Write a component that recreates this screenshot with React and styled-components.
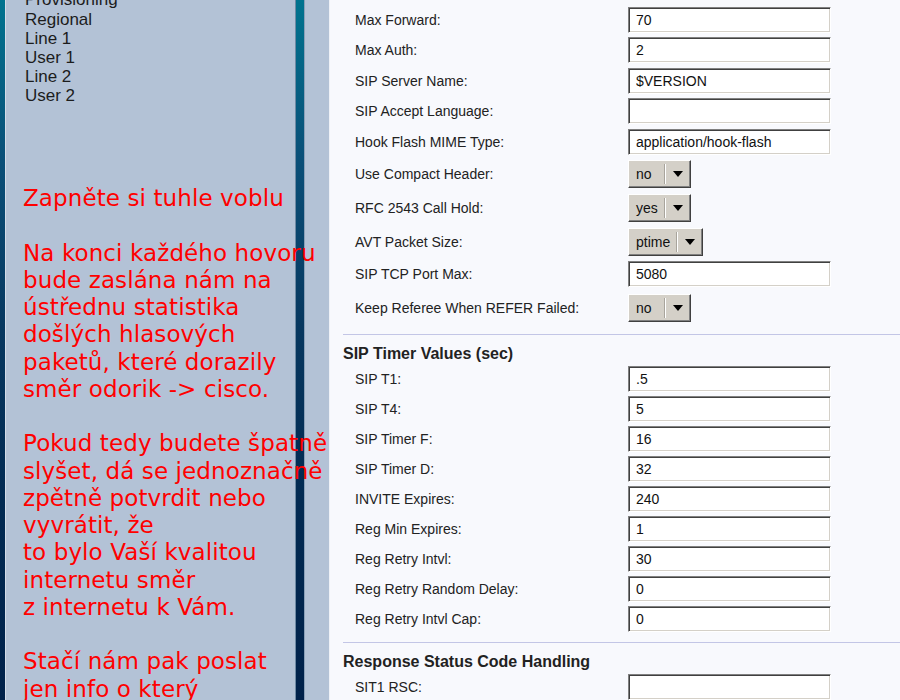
import React from 'react';
import styled, { createGlobalStyle } from 'styled-components';

const Global = createGlobalStyle`
  *, *::before, *::after { box-sizing: border-box; }
  html, body { margin: 0; padding: 0; height: 100%; overflow: hidden; background: #f8f9fd; }
  body { font-family: "Liberation Sans", Arial, sans-serif; }
`;

const railGradient = `linear-gradient(180deg, #00738f 0px, #0a4f78 160px, #07375f 330px, #022a52 500px, #00214a 700px)`;

const Page = styled.div`
  display: flex;
  height: 700px;
  overflow: hidden;
`;

const Nav = styled.aside`
  display: flex;
  flex: none;
  width: 329px;
  background: #b3c2d6;
`;

const Edge = styled.div`
  flex: none;
  width: 6px;
  background: ${railGradient};
  border-right: 1px solid #d3dbe7;
`;

const Panel = styled.div`
  flex: none;
  width: 289px;
  padding-left: 17px;
`;

const Menu = styled.ul`
  list-style: none;
  margin: -9.7px 0 0;
  padding: 0 0 0 2px;
  font-size: 17px;
  line-height: 19.2px;
  color: #1c1c1c;
`;

const MenuItem = styled.li`
  white-space: nowrap;
`;

const Notice = styled.div`
  position: relative;
  z-index: 1;
  margin-top: 79.7px;
  font-family: "DejaVu Sans", Verdana, sans-serif;
  font-size: 23px;
  line-height: 27.25px;
  letter-spacing: 0.1px;
  color: #ff0000;
  white-space: nowrap;
`;

const NoticePara = styled.p`
  margin: 0 0 27.25px;
`;

const Rail = styled.div`
  flex: none;
  width: 10px;
  background: ${railGradient};
  border-left: 1px solid #6e8aa4;
  border-right: 1px solid #8aa0b8;
`;

const Gutter = styled.div`
  flex: 1;
`;

const Content = styled.main`
  flex: 1;
  min-width: 0;
  background: #f8f9fd;
  border-left: 1px solid #eef1f7;
  padding-left: 13px;
`;

const Sections = styled.div`
  display: flex;
  flex-direction: column;
  gap: 8px;
  margin-top: -25px;
`;

const Section = styled.section`
  border-top: 1px solid #c3c6e6;
  padding-top: 9px;
`;

const SectionTitle = styled.h3`
  margin: 0;
  font-size: 16px;
  line-height: 20px;
  font-weight: bold;
  color: #222;
  white-space: nowrap;
`;

const Row = styled.div`
  display: flex;
  align-items: center;
  height: ${(p) => p.$h || 30}px;
  padding-left: 12px;
`;

const Label = styled.label`
  flex: none;
  width: 273px;
  font-size: 14px;
  color: #222;
  white-space: nowrap;
`;

const Field = styled.input`
  width: 203px;
  height: 26px;
  margin: 0;
  padding: 0 7px;
  font-family: "Liberation Sans", Arial, sans-serif;
  font-size: 14px;
  color: #111;
  background: #fff;
  border: 1px solid;
  border-color: #808080 #ffffff #ffffff #808080;
  box-shadow: inset 1px 1px #404040, inset -1px -1px #d4d0c8;
  outline: none;
`;

const Dropdown = styled.div`
  display: inline-flex;
  align-items: stretch;
  width: ${(p) => p.$w}px;
  height: 28px;
  background: #d4d0c8;
  border: 1px solid;
  border-color: #ffffff #404040 #404040 #ffffff;
  box-shadow: inset -1px -1px #808080;
  font-size: 14px;
  color: #111;
`;

const DropValue = styled.span`
  flex: 1;
  display: flex;
  align-items: center;
  padding-left: 7px;
`;

const DropArrow = styled.span`
  flex: none;
  width: 24px;
  margin: 3px 1px 3px 0;
  display: flex;
  align-items: center;
  justify-content: center;
  border-left: 1px solid #ffffff;
  box-shadow: -1px 0 #a8a49c;

  &::after {
    content: '';
    border-left: 5px solid transparent;
    border-right: 5px solid transparent;
    border-top: 6px solid #000;
  }
`;

const menu = ['Provisioning', 'Regional', 'Line 1', 'User 1', 'Line 2', 'User 2'];

const notice = [
  ['Zapněte si tuhle voblu'],
  [
    'Na konci každého hovoru',
    'bude zaslána nám na',
    'ústřednu statistika',
    'došlých hlasových',
    'paketů, které dorazily',
    'směr odorik -> cisco.',
  ],
  [
    'Pokud tedy budete špatně',
    'slyšet, dá se jednoznačně',
    'zpětně potvrdit nebo',
    'vyvrátit, že',
    'to bylo Vaší kvalitou',
    'internetu směr',
    'z internetu k Vám.',
  ],
  ['Stačí nám pak poslat', 'jen info o který', 'hovor se jednalo.'],
];

const sections = [
  {
    title: 'SIP Parameters',
    rows: [
      { label: 'Max Forward:', value: '70', h: 30 },
      { label: 'Max Auth:', value: '2', h: 30 },
      { label: 'SIP Server Name:', value: '$VERSION', h: 31 },
      { label: 'SIP Accept Language:', value: '', h: 30 },
      { label: 'Hook Flash MIME Type:', value: 'application/hook-flash', h: 31 },
      { label: 'Use Compact Header:', option: 'no', w: 63, h: 34 },
      { label: 'RFC 2543 Call Hold:', option: 'yes', w: 63, h: 34 },
      { label: 'AVT Packet Size:', option: 'ptime', w: 75, h: 33 },
      { label: 'SIP TCP Port Max:', value: '5080', h: 32 },
      { label: 'Keep Referee When REFER Failed:', option: 'no', w: 63, h: 36 },
    ],
  },
  {
    title: 'SIP Timer Values (sec)',
    rows: [
      { label: 'SIP T1:', value: '.5' },
      { label: 'SIP T4:', value: '5' },
      { label: 'SIP Timer F:', value: '16' },
      { label: 'SIP Timer D:', value: '32' },
      { label: 'INVITE Expires:', value: '240' },
      { label: 'Reg Min Expires:', value: '1' },
      { label: 'Reg Retry Intvl:', value: '30' },
      { label: 'Reg Retry Random Delay:', value: '0' },
      { label: 'Reg Retry Intvl Cap:', value: '0' },
    ],
  },
  {
    title: 'Response Status Code Handling',
    rows: [
      { label: 'SIT1 RSC:', value: '' },
      { label: 'SIT2 RSC:', value: '' },
      { label: 'SIT3 RSC:', value: '' },
    ],
  },
];

function SettingRow({ row }) {
  return (
    <Row $h={row.h}>
      <Label>{row.label}</Label>
      {row.option ? (
        <Dropdown $w={row.w}>
          <DropValue>{row.option}</DropValue>
          <DropArrow />
        </Dropdown>
      ) : (
        <Field type="text" defaultValue={row.value} />
      )}
    </Row>
  );
}

export default function App() {
  return (
    <>
      <Global />
      <Page>
        <Nav>
          <Edge />
          <Panel>
            <Menu>
              {menu.map((m) => (
                <MenuItem key={m}>{m}</MenuItem>
              ))}
            </Menu>
            <Notice>
              {notice.map((para, i) => (
                <NoticePara key={i}>
                  {para.map((line, j) => (
                    <React.Fragment key={j}>
                      {j > 0 && <br />}
                      {line}
                    </React.Fragment>
                  ))}
                </NoticePara>
              ))}
            </Notice>
          </Panel>
          <Rail />
          <Gutter />
        </Nav>
        <Content>
          <Sections>
            {sections.map((s) => (
              <Section key={s.title}>
                <SectionTitle>{s.title}</SectionTitle>
                {s.rows.map((r) => (
                  <SettingRow key={r.label} row={r} />
                ))}
              </Section>
            ))}
          </Sections>
        </Content>
      </Page>
    </>
  );
}
